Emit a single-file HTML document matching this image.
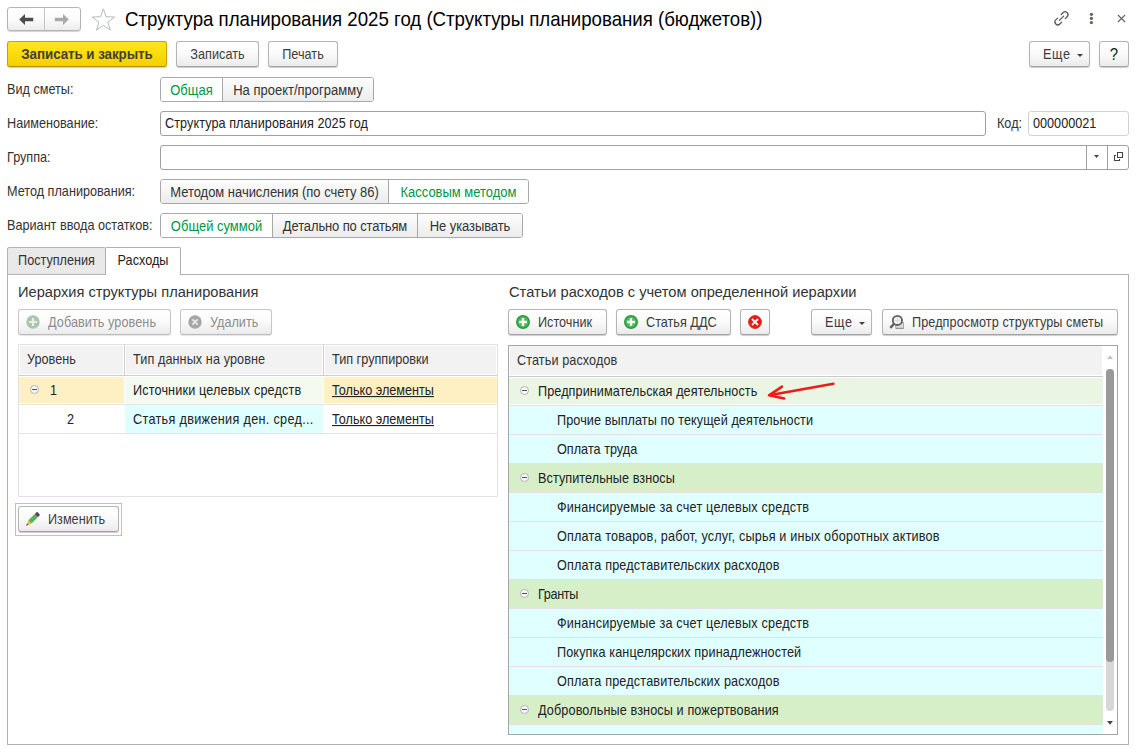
<!DOCTYPE html>
<html lang="ru">
<head>
<meta charset="utf-8">
<title>Структура планирования 2025 год</title>
<style>
*{box-sizing:border-box;margin:0;padding:0}
html,body{width:1139px;height:752px;overflow:hidden;background:#fff}
body{position:relative;font-family:"Liberation Sans",sans-serif;font-size:12.67px;color:#333}
.abs{position:absolute}
.t{position:absolute;white-space:nowrap;line-height:27px;height:27px}
.t span,.btn span.x,.tg span span{display:inline-block;white-space:nowrap}
.btn{position:absolute;height:26px;line-height:26px;border:1px solid #b4b4b4;border-bottom-color:#a2a2a2;border-radius:3px;
 background:linear-gradient(#ffffff 0%,#fbfbfb 45%,#ebebeb 100%);box-shadow:0 1px 1px rgba(0,0,0,.2);
 color:#3c3c3c;text-align:center;white-space:nowrap}
.btn.y{background:linear-gradient(#ffe61e 0%,#fbdc0a 50%,#f4cf00 100%);border-color:#c9a200;border-bottom-color:#b48f00;color:#43403c;font-weight:bold}
.btn.dis{color:#8c8c8c;border-color:#c6c6c6;border-bottom-color:#bababa;box-shadow:0 1px 1px rgba(0,0,0,.10)}
.tg{position:absolute;height:25px;border:1px solid #a8a8a8;border-radius:3px;background:#fff;overflow:hidden}
.tg>span{position:absolute;top:0;height:23px;line-height:25px;overflow:hidden;text-align:center;white-space:nowrap;
 background:linear-gradient(#fdfdfd,#ececec);border-left:1px solid #a8a8a8;color:#333;font-size:13px}
.tg>span.on{background:#fff;color:#009646}
.tg>span:first-child{border-left:0}
.inp{position:absolute;height:25px;border:1px solid #a0a0a0;border-radius:3px;background:#fff;line-height:24.5px;padding-left:4px;color:#222;white-space:nowrap}
.h2{position:absolute;font-size:14.67px;line-height:21px;color:#333;white-space:nowrap}
.ic{position:absolute}
.h2 .s{transform:scaleY(1.05)}
.ttl .s{transform:scaleY(1.06)}
.u .s{text-decoration:underline;text-underline-offset:1px}
.s{display:inline-block;white-space:nowrap;transform:scaleY(1.10);transform-origin:50% calc(50% + 0.3465em)}
</style>
</head>
<body>
<div class="abs" style="left:7px;top:7px;width:74px;height:24px;border:1px solid #b4b4b4;border-radius:3px;background:linear-gradient(#fff 0%,#fbfbfb 50%,#ececec 100%);box-shadow:0 1px 1px rgba(0,0,0,.18)">
  <div class="abs" style="left:36px;top:0;width:1px;height:22px;background:#c4c4c4"></div>
  <svg class="ic" style="left:10px;top:5px" width="18" height="13" viewBox="0 0 18 13"><path d="M1.2 6.5 L7 1 V4.8 H15.2 V8.2 H7 V12 Z" fill="#4f4a4f"/></svg>
  <svg class="ic" style="left:45px;top:5px" width="18" height="13" viewBox="0 0 18 13"><path d="M15.8 6.5 L10 1 V4.8 H1.8 V8.2 H10 V12 Z" fill="#a9a9a9"/></svg>
</div>
<svg class="ic" style="left:91px;top:8px" width="25" height="24" viewBox="0 0 25 24"><path d="M12.4 0.8 L15.2 8.8 L23.6 9.0 L16.9 14.1 L19.3 22.1 L12.4 17.3 L5.5 22.1 L7.9 14.1 L1.2 9.0 L9.6 8.8 Z" fill="#fff" stroke="#b4bbb7" stroke-width="1"/></svg>
<div class="abs ttl" style="left:125px;top:7px;line-height:25px;font-size:18.67px;color:#000;white-space:nowrap"><span style="letter-spacing:-0.011px"><span class="s">Структура планирования 2025 год (Структуры планирования (бюджетов))</span></span></div>
<svg class="ic" style="left:1051px;top:8px" width="21" height="21" viewBox="-10.5 -10.5 21 21"><g transform="translate(-0.05,-0.15) rotate(-45)" fill="none" stroke="#5c5454" stroke-width="1.25" stroke-linecap="round"><path d="M2.5 -2.9 H5.1 A2.9 2.9 0 0 1 5.1 2.9 H2.5"/><path d="M-2.5 2.9 H-5.1 A2.9 2.9 0 0 1 -5.1 -2.9 H-2.5"/><path d="M-2.9 0 H3.1"/></g></svg>
<svg class="ic" style="left:1089px;top:12px" width="5" height="13" viewBox="0 0 5 13"><circle cx="2.4" cy="2.3" r="1.65" fill="#6b645e"/><circle cx="2.4" cy="6.45" r="1.65" fill="#6b645e"/><circle cx="2.4" cy="10.6" r="1.65" fill="#6b645e"/></svg>
<svg class="ic" style="left:1117px;top:14px" width="9" height="9" viewBox="0 0 9 9"><path d="M0.9 1 L8.1 8 M8.1 1 L0.9 8" stroke="#6a6262" stroke-width="1.15" fill="none"/></svg>
<div class="btn y" style="left:7px;top:41px;width:160px;font-size:13.4px"><span style="letter-spacing:-0.072px"><span class="s">Записать и закрыть</span></span></div>
<div class="btn" style="left:176px;top:41px;width:83px"><span style="letter-spacing:0.029px"><span class="s">Записать</span></span></div>
<div class="btn" style="left:268px;top:41px;width:70px"><span class="s">Печать</span></div>
<div class="btn" style="left:1029px;top:41px;width:61px;text-align:left;padding-left:13px"><span style="letter-spacing:0.617px"><span class="s">Еще</span></span><svg class="ic" style="left:47px;top:12px" width="6" height="3" viewBox="0 0 6 3"><path d="M0 0 H6 L3.0 3 Z" fill="#453f45"/></svg></div>
<div class="btn" style="left:1099px;top:41px;width:30px;color:#1a1a1a;font-size:15px"><span class="s">?</span></div>
<div class="t" style="left:7px;top:77px"><span class="s">Вид сметы:</span></div>
<div class="tg" style="left:160px;top:77px;width:214px"><span class="on" style="left:0;width:61px"><span class="s">Общая</span></span><span style="left:61px;width:151px"><span class="s">На проект/программу</span></span></div>
<div class="t" style="left:7px;top:111px"><span class="s">Наименование:</span></div>
<div class="inp" style="left:160px;top:111px;width:826px"><span style="letter-spacing:0.060px"><span class="s">Структура планирования 2025 год</span></span></div>
<div class="t" style="left:997px;top:111px"><span class="s">Код:</span></div>
<div class="inp" style="left:1028px;top:111px;width:101px;border-color:#d2d2d2"><span class="s">000000021</span></div>
<div class="t" style="left:7px;top:145px"><span class="s">Группа:</span></div>
<div class="inp" style="left:160px;top:145px;width:969px">
  <div class="abs" style="left:925px;top:0;width:1px;height:23px;background:#a0a0a0"></div>
  <div class="abs" style="left:946px;top:0;width:1px;height:23px;background:#a0a0a0"></div>
  <svg class="ic" style="left:933px;top:9px" width="5" height="3" viewBox="0 0 5 3"><path d="M0 0 H5 L2.5 3 Z" fill="#453f45"/></svg>
  <svg class="ic" style="left:952px;top:5px" width="11" height="11" viewBox="0 0 11 11"><path d="M4.5 1.5 H9.5 V6.5 H4.5 Z M3 4.5 H1.5 V9.5 H6.5 V8" fill="none" stroke="#444" stroke-width="1.1"/></svg>
</div>
<div class="t" style="left:7px;top:179px"><span class="s">Метод планирования:</span></div>
<div class="tg" style="left:160px;top:179px;width:369px"><span style="left:0;width:227px"><span style="letter-spacing:-0.032px"><span class="s">Методом начисления (по счету 86)</span></span></span><span class="on" style="left:227px;width:140px"><span style="letter-spacing:-0.016px"><span class="s">Кассовым методом</span></span></span></div>
<div class="t" style="left:7px;top:213px"><span class="s">Вариант ввода остатков:</span></div>
<div class="tg" style="left:160px;top:213px;width:363px"><span class="on" style="left:0;width:111px"><span style="letter-spacing:-0.013px"><span class="s">Общей суммой</span></span></span><span style="left:111px;width:145px"><span style="letter-spacing:-0.131px"><span class="s">Детально по статьям</span></span></span><span style="left:256px;width:105px"><span style="letter-spacing:-0.094px"><span class="s">Не указывать</span></span></span></div>
<div class="abs" style="left:7px;top:274px;width:1122px;height:471px;border:1px solid #b0b0b0;background:#fff"></div>
<div class="abs" style="left:7px;top:247px;width:99px;height:28px;border:1px solid #b4b4b4;border-radius:2px 2px 0 0;background:#e9e9e9;line-height:26px;text-align:center;color:#333"><span class="s">Поступления</span></div>
<div class="abs" style="left:105px;top:247px;width:76px;height:28px;border:1px solid #b0b0b0;border-bottom:0;border-radius:2px 2px 0 0;background:#fff;line-height:26px;text-align:center;color:#222"><span class="s">Расходы</span></div>
<div class="h2" style="left:18px;top:282px"><span class="s">Иерархия структуры планирования</span></div>
<div class="h2" style="left:509px;top:282px"><span class="s">Статьи расходов с учетом определенной иерархии</span></div>
<div class="btn dis" style="left:18px;top:309px;width:153px;text-align:left;padding-left:29px"><svg class="ic" style="left:7px;top:5px" width="14" height="14" viewBox="0 0 14 14"><circle cx="7" cy="7" r="6.7" fill="#a9c6aa"/><path d="M7 3 V11 M3 7 H11" stroke="#e6eee6" stroke-width="2.2"/></svg><span style="letter-spacing:0.072px"><span class="s">Добавить уровень</span></span></div>
<div class="btn dis" style="left:180px;top:309px;width:92px;text-align:left;padding-left:29px"><svg class="ic" style="left:7px;top:5px" width="14" height="14" viewBox="0 0 14 14"><circle cx="7" cy="7" r="6.7" fill="#a6a6a6"/><path d="M4.4 4.4 L9.6 9.6 M9.6 4.4 L4.4 9.6" stroke="#e8e8e8" stroke-width="1.9"/></svg><span class="s">Удалить</span></div>
<div class="btn" style="left:508px;top:309px;width:99px;text-align:left;padding-left:29px"><svg class="ic" style="left:7px;top:5px" width="14" height="14" viewBox="0 0 14 14"><circle cx="7" cy="7" r="6.3" fill="#49b756" stroke="#22993a" stroke-width="1.3"/><path d="M7 3 V11 M3 7 H11" stroke="#fff" stroke-width="2.4"/></svg><span class="s">Источник</span></div>
<div class="btn" style="left:616px;top:309px;width:115px;text-align:left;padding-left:29px"><svg class="ic" style="left:7px;top:5px" width="14" height="14" viewBox="0 0 14 14"><circle cx="7" cy="7" r="6.3" fill="#49b756" stroke="#22993a" stroke-width="1.3"/><path d="M7 3 V11 M3 7 H11" stroke="#fff" stroke-width="2.4"/></svg><span class="s">Статья ДДС</span></div>
<div class="btn" style="left:740px;top:309px;width:30px"><svg class="ic" style="left:7px;top:5px" width="14" height="14" viewBox="0 0 14 14"><circle cx="7" cy="7" r="6.4" fill="#f31515" stroke="#c4381a" stroke-width="1"/><path d="M4 4 L10 10 M10 4 L4 10" stroke="#fff" stroke-width="1.8"/></svg></div>
<div class="btn" style="left:811px;top:309px;width:61px;text-align:left;padding-left:13px"><span style="letter-spacing:0.617px"><span class="s">Еще</span></span><svg class="ic" style="left:47px;top:12px" width="6" height="3" viewBox="0 0 6 3"><path d="M0 0 H6 L3.0 3 Z" fill="#453f45"/></svg></div>
<div class="btn" style="left:882px;top:309px;width:236px;text-align:left;padding-left:29px"><svg class="ic" style="left:6px;top:3px" width="16" height="17" viewBox="0 0 16 17"><rect x="6.8" y="9.6" width="7.6" height="5.8" fill="#dedede" stroke="#a0a0a0" stroke-width=".9"/><path d="M7 15.3 H14.4" stroke="#8c8c8c" stroke-width="1"/><circle cx="8.4" cy="7.4" r="4.6" fill="#edf3f6" stroke="#675c52" stroke-width="1.8"/><path d="M5.2 7.4 H11.6 M8.4 4.2 V10.6" stroke="#c3d2d8" stroke-width=".7"/><path d="M4.9 11 L1.3 14.8" stroke="#675c52" stroke-width="2.4"/></svg><span style="letter-spacing:0.085px"><span class="s">Предпросмотр структуры сметы</span></span></div>
<div class="abs" style="left:18px;top:344px;width:480px;height:153px;border:1px solid #e2e2e2;background:#fff"></div>
<div class="abs" style="left:20px;top:346px;width:103px;height:28px;background:#f2f2f2"></div>
<div class="abs" style="left:126px;top:346px;width:196px;height:28px;background:#f2f2f2"></div>
<div class="abs" style="left:325px;top:346px;width:171px;height:28px;background:#f2f2f2"></div>
<div class="abs" style="left:19px;top:375px;width:478px;height:1px;background:#cdcdcd"></div>
<div class="abs" style="left:124px;top:345px;width:1px;height:30px;background:#cfcfcf"></div>
<div class="abs" style="left:323px;top:345px;width:1px;height:30px;background:#cfcfcf"></div>
<div class="t" style="left:27px;top:347px"><span class="s">Уровень</span></div>
<div class="t" style="left:133px;top:347px"><span style="letter-spacing:0.083px"><span class="s">Тип данных на уровне</span></span></div>
<div class="t" style="left:332px;top:347px"><span class="s">Тип группировки</span></div>
<div class="abs" style="left:19px;top:377px;width:105px;height:26px;background:#fef0c3"></div>
<div class="abs" style="left:125px;top:377px;width:198px;height:26px;background:#f4faef"></div>
<div class="abs" style="left:324px;top:377px;width:173px;height:26px;background:#fef0c3"></div>
<div class="abs" style="left:19px;top:404px;width:478px;height:1px;background:#e4e4e4"></div>
<div class="abs" style="left:125px;top:405px;width:198px;height:28px;background:#e0ffff"></div>
<div class="abs" style="left:19px;top:433px;width:478px;height:1px;background:#e4e4e4"></div>
<svg class="ic" style="left:30px;top:385px" width="9" height="9" viewBox="0 0 9 9"><circle cx="4.5" cy="4.5" r="4" fill="#fbfbfb" stroke="#aeb2b2" stroke-width="1"/><path d="M2 4.5 H7" stroke="#5a5656" stroke-width="1.1"/></svg>
<div class="t" style="left:50px;top:378px;color:#222"><span class="s">1</span></div>
<div class="t" style="left:133px;top:378px;color:#222"><span style="letter-spacing:0.138px"><span class="s">Источники целевых средств</span></span></div>
<div class="t u" style="left:332px;top:378px;color:#222"><span class="s">Только элементы</span></div>
<div class="t" style="left:67px;top:407px;color:#222"><span class="s">2</span></div>
<div class="t" style="left:133px;top:407px;color:#222"><span style="letter-spacing:0.313px"><span class="s">Статья движения ден. сред...</span></span></div>
<div class="t u" style="left:332px;top:407px;color:#222"><span class="s">Только элементы</span></div>
<div class="abs" style="left:15px;top:503px;width:107px;height:33px;border:1px solid #f3c529"></div>
<div class="btn" style="left:18px;top:506px;width:101px;text-align:left;padding-left:29px"><svg class="ic" style="left:5px;top:4px" width="17" height="17" viewBox="0 0 17 17"><g transform="translate(2.1,14.8) rotate(-45)"><path d="M0 0 L5.6 -2.2 V2.2 Z" fill="#f1b535"/><path d="M0 0 L2.3 -0.9 V0.9 Z" fill="#4b4646"/><rect x="5.6" y="-2.2" width="9" height="4.4" fill="#4cb85c"/><path d="M5.6 -2.2 H14.6" stroke="#c9a23a" stroke-width=".6"/><rect x="14.4" y="-2.2" width="3.3" height="4.4" rx=".9" fill="#5b3d5e"/></g></svg><span class="s">Изменить</span></div>
<div class="abs" style="left:508px;top:345px;width:610px;height:390px;border:1px solid #a6a6a6;background:#fff;overflow:hidden">
<div class="abs" style="left:1px;top:0;width:592px;height:29px;background:#f2f2f2"></div><div class="abs" style="left:0;top:30px;width:594px;height:1px;background:#c9c9c9"></div>
<div class="t" style="left:8px;top:2px"><span style="letter-spacing:0.091px"><span class="s">Статьи расходов</span></span></div>
<div class="abs" style="left:0;top:32px;width:594px;height:26px;background:#ebf5e3"></div><div class="abs" style="left:0;top:59px;width:594px;height:1px;background:#e2e2e2"></div>
<svg class="ic" style="left:11px;top:40px" width="9" height="9" viewBox="0 0 9 9"><circle cx="4.5" cy="4.5" r="4" fill="#fbfbfb" stroke="#aeb2b2" stroke-width="1"/><path d="M2 4.5 H7" stroke="#5a5656" stroke-width="1.1"/></svg>
<div class="t" style="left:29px;top:33px;color:#222"><span style="letter-spacing:0.079px"><span class="s">Предпринимательская деятельность</span></span></div>
<div class="abs" style="left:0;top:60px;width:594px;height:28px;background:#e0ffff"></div><div class="abs" style="left:0;top:88px;width:594px;height:1px;background:#e2e2e2"></div>
<div class="t" style="left:48px;top:62px;color:#222"><span style="letter-spacing:0.078px"><span class="s">Прочие выплаты по текущей деятельности</span></span></div>
<div class="abs" style="left:0;top:89px;width:594px;height:28px;background:#e0ffff"></div><div class="abs" style="left:0;top:117px;width:594px;height:1px;background:#e2e2e2"></div>
<div class="t" style="left:48px;top:91px;color:#222"><span style="letter-spacing:0.011px"><span class="s">Оплата труда</span></span></div>
<div class="abs" style="left:0;top:118px;width:594px;height:28px;background:#d7efc9"></div><div class="abs" style="left:0;top:146px;width:594px;height:1px;background:#e2e2e2"></div>
<svg class="ic" style="left:11px;top:127px" width="9" height="9" viewBox="0 0 9 9"><circle cx="4.5" cy="4.5" r="4" fill="#fbfbfb" stroke="#aeb2b2" stroke-width="1"/><path d="M2 4.5 H7" stroke="#5a5656" stroke-width="1.1"/></svg>
<div class="t" style="left:29px;top:120px;color:#222"><span style="letter-spacing:0.058px"><span class="s">Вступительные взносы</span></span></div>
<div class="abs" style="left:0;top:147px;width:594px;height:28px;background:#e0ffff"></div><div class="abs" style="left:0;top:175px;width:594px;height:1px;background:#e2e2e2"></div>
<div class="t" style="left:48px;top:149px;color:#222"><span style="letter-spacing:0.202px"><span class="s">Финансируемые за счет целевых средств</span></span></div>
<div class="abs" style="left:0;top:176px;width:594px;height:28px;background:#e0ffff"></div><div class="abs" style="left:0;top:204px;width:594px;height:1px;background:#e2e2e2"></div>
<div class="t" style="left:48px;top:178px;color:#222"><span style="letter-spacing:0.164px"><span class="s">Оплата товаров, работ, услуг, сырья и иных оборотных активов</span></span></div>
<div class="abs" style="left:0;top:205px;width:594px;height:28px;background:#e0ffff"></div><div class="abs" style="left:0;top:233px;width:594px;height:1px;background:#e2e2e2"></div>
<div class="t" style="left:48px;top:207px;color:#222"><span style="letter-spacing:0.158px"><span class="s">Оплата представительских расходов</span></span></div>
<div class="abs" style="left:0;top:234px;width:594px;height:28px;background:#d7efc9"></div><div class="abs" style="left:0;top:262px;width:594px;height:1px;background:#e2e2e2"></div>
<svg class="ic" style="left:11px;top:243px" width="9" height="9" viewBox="0 0 9 9"><circle cx="4.5" cy="4.5" r="4" fill="#fbfbfb" stroke="#aeb2b2" stroke-width="1"/><path d="M2 4.5 H7" stroke="#5a5656" stroke-width="1.1"/></svg>
<div class="t" style="left:29px;top:236px;color:#222"><span style="letter-spacing:-0.362px"><span class="s">Гранты</span></span></div>
<div class="abs" style="left:0;top:263px;width:594px;height:28px;background:#e0ffff"></div><div class="abs" style="left:0;top:291px;width:594px;height:1px;background:#e2e2e2"></div>
<div class="t" style="left:48px;top:265px;color:#222"><span style="letter-spacing:0.202px"><span class="s">Финансируемые за счет целевых средств</span></span></div>
<div class="abs" style="left:0;top:292px;width:594px;height:28px;background:#e0ffff"></div><div class="abs" style="left:0;top:320px;width:594px;height:1px;background:#e2e2e2"></div>
<div class="t" style="left:48px;top:294px;color:#222"><span style="letter-spacing:0.113px"><span class="s">Покупка канцелярских принадлежностей</span></span></div>
<div class="abs" style="left:0;top:321px;width:594px;height:28px;background:#e0ffff"></div><div class="abs" style="left:0;top:349px;width:594px;height:1px;background:#e2e2e2"></div>
<div class="t" style="left:48px;top:323px;color:#222"><span style="letter-spacing:0.158px"><span class="s">Оплата представительских расходов</span></span></div>
<div class="abs" style="left:0;top:350px;width:594px;height:28px;background:#d7efc9"></div><div class="abs" style="left:0;top:378px;width:594px;height:1px;background:#e2e2e2"></div>
<svg class="ic" style="left:11px;top:359px" width="9" height="9" viewBox="0 0 9 9"><circle cx="4.5" cy="4.5" r="4" fill="#fbfbfb" stroke="#aeb2b2" stroke-width="1"/><path d="M2 4.5 H7" stroke="#5a5656" stroke-width="1.1"/></svg>
<div class="t" style="left:29px;top:352px;color:#222"><span style="letter-spacing:0.110px"><span class="s">Добровольные взносы и пожертвования</span></span></div>
<div class="abs" style="left:0;top:379px;width:594px;height:28px;background:#e0ffff"></div><div class="abs" style="left:0;top:407px;width:594px;height:1px;background:#e2e2e2"></div>
<svg class="ic" style="left:598px;top:9px" width="6" height="4" viewBox="0 0 6 4"><path d="M0 4 H6 L3 0.3 Z" fill="#b4c8c2"/></svg>
<div class="abs" style="left:597px;top:23px;width:8px;height:342px;border-radius:4px;background:#d7d7d7"></div>
<div class="abs" style="left:597px;top:23px;width:8px;height:293px;border-radius:4px;background:#999"></div>
<svg class="ic" style="left:598px;top:375px" width="6" height="4" viewBox="0 0 6 4"><path d="M0 0 H6 L3 3.7 Z" fill="#4a424a"/></svg>
</div>
<svg class="ic" style="left:760px;top:376px" width="84" height="30" viewBox="0 0 84 30"><g fill="none" stroke="#ee1c16" stroke-width="2.6" stroke-linecap="round" stroke-linejoin="round"><path d="M73.4 7.8 L10.5 19"/><path d="M22 10.7 L9 19.3 L24.2 22.5"/></g></svg>
</body>
</html>
